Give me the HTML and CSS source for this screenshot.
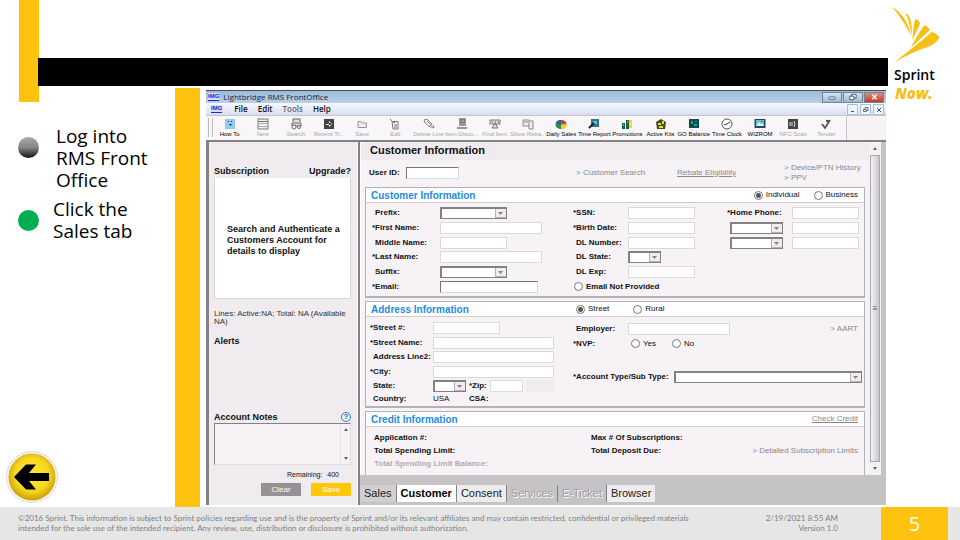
FILE: index.html
```html
<!DOCTYPE html>
<html lang="en">
<head>
<meta charset="utf-8">
<title>RMS Front Office</title>
<link rel="stylesheet" href="styles.css">
</head>
<body>
<main class="slide">
  <div class="accent"></div>
  <div class="bar"></div>
  <div class="stripe"></div>

  <section class="steps">
    <ul class="step-list">
      <li class="step"><span class="dot dot-done"></span><span>Log into RMS Front Office</span></li>
      <li class="step step-current"><span class="dot dot-active"></span><span>Click the Sales tab</span></li>
    </ul>
    <button class="back" aria-label="Back">
      <svg viewBox="0 0 54 54">
        <defs><radialGradient id="gold" cx=".5" cy=".45" r=".55"><stop offset="0" stop-color="#ffea3c"/><stop offset=".65" stop-color="#f8d71e"/><stop offset="1" stop-color="#c99e0c"/></radialGradient></defs>
        <circle cx="27" cy="27" r="25.5" fill="#f4f2ea" stroke="#bbb" stroke-dasharray="2 1" stroke-width=".7"/>
        <circle cx="27" cy="27" r="23.500" fill="url(#gold)"/>
        <path d="M9 27 21 14.500H31L24 23H44V31H24L31 39.500H21Z"/>
      </svg>
    </button>
  </section>

  <aside class="brand">
    <svg class="wing" viewBox="0 0 48 58" fill="#f9bf16">
      <path d="M0 .5C8 6 17 15 18.700 29.500 13 17 7 10 0 .5Z"/>
      <path d="M13 6.500C18 9 20.500 16 19.800 30 18 20 16.500 13 13 6.500Z"/>
      <path d="M23 13.500C25 12.500 28.500 16 27.800 18.500L20.300 34C21 27 21.500 20 23 13.500Z"/>
      <path d="M32 19.500C34 19 38 22 37.300 24.500L18.500 42C23 34 27 26 32 19.500Z"/>
      <path d="M39.500 26C42 26 47 29.500 47.300 32 45 35.500 42.500 37.500 38 40 24 45 12 50 1.500 57.500 14 46 28 37 39.500 26Z"/>
    </svg>
    <span class="brand-name">Sprint</span>
    <span class="brand-tag">Now.</span>
  </aside>

  <section class="app">
    <header class="titlebar">
      <span class="img-badge">IMG</span><span class="app-title">Lightbridge RMS FrontOffice</span>
      <button class="win" aria-label="Minimize"><svg viewBox="0 0 20 9"><rect x="6.500" y="4.500" width="7" height="2.500" rx="1" fill="#fff" stroke="#456"/></svg></button>
      <button class="win" aria-label="Restore"><svg viewBox="0 0 20 9"><path d="M8.500 4V1.500h5v4H11M6.500 3.500h4.500v4H6.500z" fill="#fff" stroke="#456"/></svg></button>
      <button class="win win-close" aria-label="Close"><svg viewBox="0 0 20 9"><path d="m8 2 5 5m0-5L8 7" stroke="#fff" stroke-width="1.500"/></svg></button>
    </header>
    <nav class="menubar">
      <span class="img-badge">IMG</span>
      <a href="#">File</a><a href="#">Edit</a><a href="#" class="soft">Tools</a><a href="#">Help</a>
      <span class="mdi">
        <button aria-label="Minimize window"><svg viewBox="0 0 9 9"><path d="M3 6.500h3" stroke="#456"/></svg></button>
        <button aria-label="Restore window"><svg viewBox="0 0 9 9"><path d="M4 4V2.500h3v3H6M2.500 4.500h3v2h-3z" fill="none" stroke="#456" stroke-width=".8"/></svg></button>
        <button aria-label="Close window"><svg viewBox="0 0 9 9"><path d="m3 3 4 4m0-4L3 7" stroke="#456"/></svg></button>
      </span>
    </nav>
    <div class="toolbar">
      <button class="tool"><svg viewBox="0 0 12 12"><path fill="#8ecbed" d="M1 1h10v10H1z"/><path d="M4 3h1v1H4zm3 0h1v1H7zM5 6h3L6.500 8z" fill="#135"/></svg>How To</button>
      <button class="tool off"><svg viewBox="0 0 12 12"><path d="M1 1h10v10H1zM1 3.500h10M3 5v1m2-1v1m2-1v1m2-1v1M3 8v1m2-1v1m2-1v1m2-1v1" fill="#eee" stroke="#777"/></svg>New</button>
      <button class="tool off"><svg viewBox="0 0 12 12"><path d="M3 4V1h7v3M2 5h9v3H2z" fill="#ddd" stroke="#666"/><circle cx="4" cy="9" r="2" fill="#fff" stroke="#666"/><circle cx="9" cy="9" r="1.500" fill="#fff" stroke="#666"/></svg>Search</button>
      <button class="tool off"><svg viewBox="0 0 12 12"><path fill="#444" d="M1 1h10v10H1z"/><path d="M3 6h3V3l3 3-3 3V7H3z" fill="#fff"/><circle cx="7" cy="6" r="1"/></svg>Recent Tr...</button>
      <button class="tool off"><svg viewBox="0 0 12 12"><path d="M2 9.500v-6h3l1 1.500h4.500v4.500z" fill="#eee" stroke="#999"/></svg>Save</button>
      <button class="tool off"><svg viewBox="0 0 12 12"><path d="M3 3.500h6V11H4zM1 1l4 4 2-2M5 7h3M5 9h3" fill="none" stroke="#777"/></svg>Edit</button>
      <button class="tool off"><svg viewBox="0 0 12 12"><path d="m1 2 3-1 5 5-2 3-5-4zM4 3l4 4m0 2 3 1-1-3" fill="#eee" stroke="#888"/></svg>Delete Line</button>
      <button class="tool off"><svg viewBox="0 0 12 12"><path d="M4 1h5v4H4zM3 7h7M1 10h10" fill="#999" stroke="#777" stroke-width="1.500"/></svg>Item Disco...</button>
      <button class="tool off"><svg viewBox="0 0 12 12"><path d="M1 2h10v4H1zm2 8 3-5 3 5z" fill="#ddd" stroke="#777"/><path d="M3 4h1m2 0h1m2 0h1" stroke="#444"/></svg>Find Item</button>
      <button class="tool off"><svg viewBox="0 0 12 12"><path d="M1 2h6v6H1zm7 1h3v8H7V8M2 4h4" fill="#eee" stroke="#888"/></svg>Show Reba...</button>
      <button class="tool"><svg viewBox="0 0 12 12"><ellipse cx="6" cy="6.500" rx="5.500" ry="4.500" fill="#2a8a42"/><path d="M6 6.500 1 5a5 4 0 0 1 5-3z" fill="#3558c8"/><path d="M6 6.500V2a5 4 0 0 1 5 4z" fill="#e3382a"/><path d="M6 6.500 11 6a5 4 0 0 1-5 5z" fill="#f3d020"/></svg>Daily Sales</button>
      <button class="tool"><svg viewBox="0 0 12 12"><path d="M3 1h8v8H3z" fill="#287b7b"/><path d="M5 3h4v3H5z" fill="#8ad"/><path d="m1 10 5-5" stroke="#124" stroke-width="2"/></svg>Time Report</button>
      <button class="tool"><svg viewBox="0 0 12 12"><path d="M1 5h3v6H1zm4-3h3v9H5z" fill="#176044"/><path d="M8 2h3v8H8z" fill="#f0d823"/><path d="M2 7h1m3-3h1m2 2h1" stroke="#fff"/></svg>Promotions</button>
      <button class="tool"><svg viewBox="0 0 12 12"><path d="M1 4 6 1l5 3-1 7H2z" fill="#4a4a16"/><path d="M3 5h3v2H3zm4-2h2v3H7zM4 8h4v2H4z" fill="#e8d838"/></svg>Active Kits</button>
      <button class="tool"><svg viewBox="0 0 12 12"><path d="M1 1h10v9H1z" fill="#104b4e"/><path d="M3 3h2v3H3zm4 0h2v1H7zM6 6h3v2H6z" fill="#28a0a0"/></svg>GO Balance</button>
      <button class="tool"><svg viewBox="0 0 12 12"><circle cx="6" cy="6" r="5" fill="#fff" stroke="#555"/><path d="m3 7 3-1 3-2" fill="none" stroke="#333"/></svg>Time Clock</button>
      <button class="tool"><svg viewBox="0 0 12 12"><path d="M.5 1h11v9H.5z" fill="#174d63"/><path d="M2 2h8v6H2z" fill="#5bc4dc"/><path d="m2 8 3-4 2 2 1-1 2 3z" fill="#eee"/><path d="M7 3h2v1H7z" fill="#d33"/></svg>WIZROM</button>
      <button class="tool off"><svg viewBox="0 0 12 12"><path d="M1 1h10v10H1z" fill="#444"/><path d="M3 4v4m2-4v4m2-5q2 3 0 6" stroke="#ddd" fill="none"/></svg>NFC Scan</button>
      <button class="tool off"><svg viewBox="0 0 12 12"><path d="m2 6 3 4 5-8M6 3h4" fill="none" stroke="#555" stroke-width="1.800"/></svg>Tender</button>
    </div>

    <div class="workspace">
      <aside class="side">
        <div class="side-head"><strong>Subscription</strong><strong>Upgrade?</strong></div>
        <div class="notice">Search and Authenticate a Customers Account for details to display</div>
        <p class="lines">Lines: Active:NA; Total: NA (Available NA)</p>
        <strong class="alerts">Alerts</strong>
        <div class="side-head notes-head"><label for="notes">Account Notes</label><button class="help" aria-label="Help">?</button></div>
        <div class="notes"><textarea id="notes"></textarea><span class="notes-scroll"><i class="up"></i><i class="down"></i></span></div>
        <p class="remaining">Remaining: <span>400</span></p>
        <div class="actions"><button class="clear">Clear</button><button class="save">Save</button></div>
      </aside>

      <div class="content">
        <div class="form-area">
          <form class="forms">
            <h1>Customer Information</h1>
            <div class="user-row">
              <label for="uid">User ID:</label><input id="uid" class="w52 sunk">
              <a href="#" class="plain">&gt; Customer Search</a>
              <a href="#">Rebate Eligibility</a>
              <span class="links"><a href="#" class="plain">&gt; Device/PTN History</a><a href="#" class="plain">&gt; PPV</a></span>
            </div>

            <section class="card">
              <header><h2>Customer Information</h2>
                <span class="choices"><label><input type="radio" name="kind" checked>Individual</label><label><input type="radio" name="kind">Business</label></span>
              </header>
              <div class="customer-grid">
                <label class="opt" for="prefix">Prefix:</label><select id="prefix" class="w66"></select>
                <label for="ssn">*SSN:</label><input id="ssn" class="w66">
                <label for="phone">*Home Phone:</label><input id="phone" class="w66">

                <label for="first">*First Name:</label><input id="first" class="w102">
                <label for="birth">*Birth Date:</label><input id="birth" class="w66">
                <select aria-label="Phone type 2" class="w52 opt-field"></select><input aria-label="Phone 2" class="w66">

                <label class="opt" for="middle">Middle Name:</label><input id="middle" class="w66">
                <label class="opt" for="dl">DL Number:</label><input id="dl" class="w66">
                <select aria-label="Phone type 3" class="w52 opt-field"></select><input aria-label="Phone 3" class="w66">

                <label for="last">*Last Name:</label><input id="last" class="w102">
                <label class="opt" for="dlstate">DL State:</label><select id="dlstate" class="w32 row-end"></select>

                <label class="opt first" for="suffix">Suffix:</label><select id="suffix" class="w66"></select>
                <label class="opt" for="dlexp">DL Exp:</label><input id="dlexp" class="w66">

                <label class="first" for="email">*Email:</label><input id="email" class="w98 sunk">
                <span class="choices strong wide"><label><input type="radio" name="noemail">Email Not Provided</label></span>
              </div>
            </section>

            <section class="card">
              <header><h2>Address Information</h2>
                <span class="choices mid"><label><input type="radio" name="addr" checked>Street</label><label><input type="radio" name="addr">Rural</label></span>
              </header>
              <div class="address">
                <div class="address-grid">
                  <label for="street">*Street #:</label><input id="street" class="w66">
                  <label for="sname">*Street Name:</label><input id="sname" class="w120">
                  <label class="opt" for="line2">Address Line2:</label><input id="line2" class="w120">
                  <label for="city">*City:</label><input id="city" class="w120">
                  <label class="opt" for="state">State:</label>
                  <span class="zip"><select id="state" class="w32"></select><label for="zip">*Zip:</label><input id="zip" class="w32"><input aria-label="Zip extension" class="ext" disabled></span>
                  <span class="opt">Country:</span><span class="zip"><span class="usa">USA</span><b>CSA:</b></span>
                </div>
                <div class="work">
                  <div class="work-row"><label class="opt" for="emp">Employer:</label><input id="emp" class="w102"><a href="#" class="plain push">&gt; AART</a></div>
                  <div class="work-row"><span>*NVP:</span><span class="choices nvp"><label><input type="radio" name="nvp">Yes</label><label><input type="radio" name="nvp">No</label></span></div>
                  <div class="work-row account"><label for="acct">*Account Type/Sub Type:</label><select id="acct"></select></div>
                </div>
              </div>
            </section>

            <section class="card credit">
              <header><h2>Credit Information</h2><a href="#">Check Credit</a></header>
              <div class="credit-grid">
                <b>Application #:</b><b>Max # Of Subscriptions:</b><span></span>
                <b>Total Spending Limit:</b><b>Total Deposit Due:</b><a href="#" class="plain">&gt; Detailed Subscription Limits</a>
                <b class="dim">Total Spending Limit Balance:</b>
              </div>
            </section>
          </form>
          <div class="scroll"><i class="up"></i><span class="thumb">≡</span><i class="down"></i></div>
        </div>
        <nav class="tabs">
          <button class="tab sales">Sales</button><button class="tab current">Customer</button><button class="tab">Consent</button><button class="tab muted">Services</button><button class="tab muted">E-Ticket</button><button class="tab last">Browser</button>
        </nav>
      </div>
    </div>
  </section>

  <footer class="footer">
    <p class="legal">©2016 Sprint. This information is subject to Sprint policies regarding use and is the property of Sprint and/or its relevant affiliates and may contain restricted, confidential or privileged materials intended for the sole use of the intended recipient. Any review, use, distribution or disclosure is prohibited without authorization.</p>
    <p class="stamp">2/19/2021 8:55 AM<br>Version 1.0</p>
    <span class="page">5</span>
  </footer>
</main>
</body>
</html>
```
FILE: styles.css
```css
* { box-sizing: border-box; }
body { margin: 0; background: #fff; font-family: "Liberation Sans", Arial, sans-serif; font-size: 8px; color: #111; }
h1, h2, p, ul { margin: 0; padding: 0; }
button, input, select, textarea { font: inherit; margin: 0; padding: 0; border: 0; border-radius: 0; }
svg { display: block; }
a { color: #8a888a; text-decoration: underline; }
.plain { text-decoration: none; }

.slide {
  display: grid;
  min-height: 100vh;
  grid-template-columns: 19px 20px 136px 25px 6px minmax(0, 1fr) 74px;
  grid-template-rows: 58px 30px minmax(0, 1fr) 33px;
}
.accent { grid-column: 2; grid-row: 1 / 4; height: 102px; background: #ffc20e; }
.bar { grid-column: 3 / 7; grid-row: 2; height: 28px; margin-right: -2px; margin-left: -1px; background: #000; }
.stripe { grid-column: 4; grid-row: 3; background: #ffc20e; }

.steps {
  grid-column: 1 / 4; grid-row: 3;
  display: flex; flex-direction: column; justify-content: space-between;
  padding: 37px 16px 3px 5px;
}
.step-list { list-style: none; padding-left: 13px; font: 19px/22px "Open Sans", "Noto Sans", sans-serif; color: #000; }
.step { display: flex; align-items: flex-start; gap: 17px; padding-right: 8px; margin-bottom: 7px; }
.step-current { gap: 14px; }
.dot { flex: none; width: 21px; height: 21px; margin-top: 12px; border-radius: 50%; }
.dot-done { background: linear-gradient(#aaa, #858585 50%, #111); }
.dot-active { background: #00b050; }
.back { width: 54px; background: none; }

.brand { grid-column: 7; grid-row: 1 / 4; display: flex; flex-direction: column; padding: 6px 0 0 6px; font-family: "Open Sans", "Noto Sans", sans-serif; }
.wing { width: 48px; height: 58px; }
.brand-name { padding-left: 2px; font-size: 14px; line-height: 21px; font-weight: 600; color: #000; }
.brand-tag { padding-left: 3px; font-size: 15px; line-height: 16px; font-weight: 800; font-style: italic; color: #f9bf16; }

.app { grid-column: 6; grid-row: 3; margin: 2px 0; display: flex; flex-direction: column; background: #f6f2f6; }
.titlebar { display: flex; align-items: center; gap: 1px; height: 13px; border-top: 1px solid #45515d; background: linear-gradient(#9dbbd8, #b9d0e7); padding: 0 2px; }
.img-badge { font-size: 6px; line-height: 7px; font-weight: bold; color: #2226c8; background: #d5dcfa; border-bottom: 1px solid #2226c8; }
.app-title { flex: 1; padding-left: 3px; font: 8px/12px "Open Sans", sans-serif; color: #223; }
.win { width: 20px; height: 11px; border: 1px solid #71859b; background: linear-gradient(#d5e3f1, #9fb9d3); }
.win-close { background: linear-gradient(#dc9080, #c03a28); }
.menubar { display: flex; align-items: center; gap: 10px; height: 13px; padding: 0 2px 0 5px; background: linear-gradient(#f7f9fd, #d8ddf0); border-bottom: 1px solid #c8c4cc; }
.menubar a { color: #112; text-decoration: none; font: 600 8px/12px "Open Sans", sans-serif; }
.menubar a:first-of-type { margin-left: 2px; }
.menubar .soft { color: #667; }
.mdi { margin-left: auto; display: flex; gap: 2px; }
.mdi button { width: 11px; height: 11px; border: 1px solid #a8c0d8; background: #eef5fc; }
.toolbar { display: flex; height: 24px; padding: 2px 3px 0 2px; margin-right: 39px; border-right: 1px solid #c9c5c9; background: #f9f6f9; }
.toolbar::before { content: ""; width: 3px; margin-bottom: 3px; border: solid #bbb; border-width: 0 1px; }
.tool { flex: 1 1 0; min-width: 0; display: flex; flex-direction: column; align-items: center; white-space: nowrap; background: none; font-size: 6px; line-height: 8px; color: #000; }
.tool svg { width: 12px; height: 12px; flex: none; }
.tool.off { color: #a8a5a8; }

.workspace { flex: 1; display: flex; border-top: 2px solid #848184; }
.side { width: 152px; display: flex; flex-direction: column; padding: 22px 6px 9px 5px; border-left: 3px solid #848184; border-right: 1px solid #fff; background: #efebef; }
.side-head { display: flex; justify-content: space-between; align-items: center; height: 14px; font-size: 9px; line-height: 12px; font-weight: bold; }
.notice { height: 121px; padding: 46px 8px 0 12px; border: 1px solid #d8d5d8; border-top: 0; background: #fff; font-size: 9px; line-height: 11px; font-weight: bold; }
.lines { padding-top: 11px; line-height: 8px; color: #333; }
.alerts { padding-top: 9px; font-size: 9px; line-height: 12px; }
.notes-head { margin-top: auto; height: 12px; }
.help { width: 10px; height: 10px; border: 1px solid #3778b8; border-radius: 50%; background: #e8f2fb; color: #2465a8; font-size: 8px; line-height: 8px; font-weight: bold; }
.notes { display: flex; height: 42px; border: 1px solid #848184; border-right-color: #ddd; border-bottom-color: #ddd; background: #f6f2f6; }
.notes textarea { flex: 1; min-width: 0; resize: none; background: none; }
.notes-scroll { width: 10px; display: flex; flex-direction: column; justify-content: space-between; align-items: center; padding: 4px 0; border-left: 1px solid #e3e0e3; }
.up, .down { width: 0; height: 0; border: solid transparent; border-width: 0 2px; }
.up { border-bottom: 3px solid #666; }
.down { border-top: 3px solid #666; }
.remaining { padding: 6px 12px 4px; text-align: right; font-size: 7px; line-height: 8px; }
.remaining span { padding-left: 3px; }
.actions { display: flex; justify-content: flex-end; gap: 10px; }
.actions button { width: 40px; height: 13px; font-size: 8px; color: #fff; }
.clear { background: #949294; }
.save { background: #ffc708; }

.content { flex: 1; min-width: 0; display: flex; flex-direction: column; background: #c6c3c6; border-left: 2px solid #848184; }
.form-area { flex: 1; display: flex; border-right: 5px solid #c6c3c6; background: #f6f2f6; }
.forms { flex: 1; min-width: 0; display: flex; flex-direction: column; border-left: 1px solid #fff; font-weight: bold; line-height: 10px; }
h1 { height: 18px; padding-left: 9px; background: #efebef; font-size: 11px; line-height: 17px; }
.user-row { height: 27px; display: grid; grid-template-columns: 37px minmax(0, 169fr) 101px 107px 77px; align-items: center; margin: 0 8px; padding-bottom: 2px; }
.user-row a { font-weight: normal; }
.links { display: flex; flex-direction: column; white-space: nowrap; }

input, select { height: 12px; border: 1px solid #dcd9dc; background: #fff; }
select { appearance: none; border: 1px solid #848184; border-width: 2px 1px 1px 2px; background: #fff url("data:image/svg+xml,%3Csvg xmlns='http://www.w3.org/2000/svg' viewBox='0 0 11 9'%3E%3Cpath d='M0 0h11v9H0z' fill='%23efebef'/%3E%3Cpath d='M.5 0v9M0 8.500h11' stroke='%23b5b2b5'/%3E%3Cpath d='M3 3h5L5.500 6z' fill='%23848184'/%3E%3C/svg%3E") right center / 11px 9px no-repeat; }
.sunk { border: 1px solid #dcd9dc; border-top-color: #777; border-left-color: #777; }
input[type="radio"] { appearance: none; width: 9px; height: 9px; border: 1px solid #777; border-radius: 50%; background: #fff; }
input[type="radio"]:checked { background: radial-gradient(#555 0 2px, #fff 3px); }
.w32 { width: 33px; }
.w52 { width: 53px; }
.w66 { width: 67px; }
.w98 { width: 98px; }
.w102 { width: 102px; }
.w120 { width: 121px; }
.opt { padding-left: 3px; }
.opt-field { margin-left: 3px; }

.card { margin: 0 4px 3px 4px; border: 1px solid #b5b2b5; border-bottom-width: 2px; }
.card header { display: flex; align-items: center; justify-content: space-between; height: 15px; padding: 0 6px 0 5px; background: #fff; border-bottom: 1px solid #d0cdd0; }
.card header a { font-weight: normal; }
h2 { font-size: 10px; line-height: 13px; color: #1e8ddd; }
.choices { display: flex; align-items: center; gap: 14px; font-weight: normal; }
.choices label { display: flex; align-items: center; gap: 3px; }
.mid { width: 282px; gap: 24px; }
.strong { font-weight: bold; }
.wide { grid-column: 3 / 7; padding-left: 1px; }
.customer-grid { display: grid; grid-template-columns: 68px minmax(0, 133fr) 55px minmax(0, 99fr) 65px 67px; grid-template-rows: repeat(6, 1fr); align-items: center; height: 93px; padding: 3px 5px 2px 6px; white-space: nowrap; }
.first { grid-column: 1; }
.row-end { grid-column: 4 / 7; }
.address { display: flex; height: 89px; padding: 4px 2px 0 4px; }
.address-grid { width: 203px; height: 84px; display: grid; grid-template-columns: 63px 1fr; grid-template-rows: repeat(5, 29fr) 23fr; align-items: center; white-space: nowrap; }
.zip { display: flex; align-items: center; gap: 3px; }
.zip .ext { width: 28px; background: #efebef; border-color: #efebef; }
.zip .usa { width: 33px; font-weight: normal; }
.work { flex: 1; min-width: 0; }
.work-row { display: grid; grid-template-columns: 55px 102px 1fr; align-items: center; height: 15px; }
.work-row .push { justify-self: end; padding-right: 4px; font-weight: normal; }
.nvp { padding-left: 3px; gap: 16px; }
.account { grid-template-columns: 101px minmax(0, 1fr); margin-top: 18px; white-space: nowrap; }
.credit { flex: 1; margin-bottom: 0; border-bottom: 0; }
.credit-grid { display: grid; grid-template-columns: 217fr 120fr 147fr; grid-auto-rows: 13px; align-items: center; padding: 4px 6px 0 8px; white-space: nowrap; }
.credit-grid a { justify-self: end; font-weight: normal; }
.dim { color: #b0adb0; }

.scroll { width: 12px; display: flex; flex-direction: column; align-items: center; padding: 5px 0; background: #f3f1f3; }
.thumb { flex: 1; width: 10px; margin: 5px 0; display: flex; align-items: center; justify-content: center; border: 1px solid #aaa7aa; background: linear-gradient(90deg, #f4f2f4, #c9c7cc); font-size: 8px; color: #555; }
.tabs { display: flex; align-items: flex-start; height: 30px; padding-top: 10px; background: #c6c3c6; }
.tab { height: 17px; padding: 0 4px; background: #eeecee; border-right: 1px solid #848184; font-size: 11px; line-height: 15px; color: #222; }
.tab.sales { background: #d2cfd2; }
.tab.current { background: #fff; font-weight: bold; color: #000; }
.tab.muted { background: #c6c3c6; color: #a09da0; text-shadow: 1px 1px #fff; }
.tab.last { border: 0; }

.footer { grid-column: 1 / -1; grid-row: 4; display: flex; padding: 0 12px 0 18px; background: #e6e6e6; color: #808080; font: 8px/10px Lato, "Open Sans", sans-serif; }
.legal { flex: 1; padding-top: 6px; padding-right: 60px; }
.stamp { width: 100px; padding: 6px 24px 0 0; text-align: right; white-space: nowrap; }
.page { width: 67px; margin-left: 19px; background: #ffc20e; color: #fff; font: 20px/33px "Open Sans", sans-serif; text-align: center; }
```
